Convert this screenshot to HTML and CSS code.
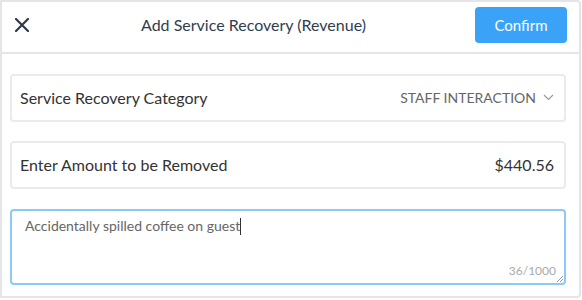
FILE: index.html
```html
<!DOCTYPE html>
<html lang="en">
<head>
    <meta charset="UTF-8">
    <meta name="viewport" content="width=device-width, initial-scale=1.0">
    <title>Add Service Recovery (Revenue)</title>
    <link rel="stylesheet" href="styles.css">
</head>
<body>
    <div class="modal">
        <div class="modal-header">
            <button class="close-btn" aria-label="Close">
                <svg width="14" height="14" viewBox="0 0 14 14">
                    <path d="M1 1 L13 13 M13 1 L1 13" stroke="#2c3a4b" stroke-width="2.2" stroke-linecap="round"/>
                </svg>
            </button>
            <h2>Add Service Recovery (Revenue)</h2>
            <button class="confirm-btn">Confirm</button>
        </div>

        <div class="modal-body">
            <div class="field-row">
                <span class="field-label">Service Recovery Category</span>
                <span class="field-select">
                    STAFF INTERACTION
                    <svg width="11" height="7" viewBox="0 0 11 7">
                        <path d="M1 1 L5.5 5.5 L10 1" fill="none" stroke="#9a9a9a" stroke-width="1.2"/>
                    </svg>
                </span>
            </div>

            <div class="field-row">
                <span class="field-label">Enter Amount to be Removed</span>
                <span class="field-value">$440.56</span>
            </div>

            <div class="note-box">
                <div class="note-text">Accidentally spilled coffee on guest<span class="caret"></span></div>
                <span class="note-count">36/1000</span>
                <svg class="resize-grip" width="7" height="7" viewBox="0 0 7 7">
                    <path d="M1 7 L7 1 M4 7 L7 4" stroke="#999" stroke-width="1"/>
                </svg>
            </div>
        </div>
    </div>
</body>
</html>
```

FILE: styles.css
```css
* {
    margin: 0;
    padding: 0;
    box-sizing: border-box;
}

body {
    font-family: Lato, 'Open Sans', sans-serif;
    background: #fff;
    color: #333;
}

.modal {
    width: 581px;
    height: 298px;
    border: 2px solid #e3e5e8;
    border-radius: 0 4px 4px 0;
    background: #fff;
}

.modal-header {
    height: 52px;
    border-bottom: 2px solid #e3e5e8;
    display: flex;
    align-items: center;
    padding: 0 12px 5px 10px;
}

.close-btn {
    background: none;
    border: none;
    width: 20px;
    height: 20px;
    display: flex;
    align-items: center;
    justify-content: center;
}

.modal-header h2 {
    flex: 1;
    text-align: center;
    font-size: 16px;
    font-weight: 400;
    color: #2f3e4e;
}

.confirm-btn {
    width: 92px;
    height: 36px;
    background: #3aa3f7;
    color: #fff;
    border: none;
    border-radius: 4px;
    font-family: inherit;
    font-size: 15px;
}

.modal-body {
    padding: 20px 13px 0 8px;
    display: flex;
    flex-direction: column;
    gap: 19px;
}

.field-row {
    height: 48px;
    border: 2px solid #ebebeb;
    border-radius: 4px;
    display: flex;
    align-items: center;
    justify-content: space-between;
    padding: 0 10px 2px 8px;
}

.field-label {
    font-size: 16px;
    color: #333;
}

.field-select {
    font-size: 14px;
    color: #666;
    display: flex;
    align-items: center;
    gap: 7px;
}

.field-value {
    font-size: 16px;
    color: #333;
}

.note-box {
    position: relative;
    height: 76px;
    margin-top: 1px;
    border: 2px solid #8cc8fa;
    border-radius: 4px;
    padding: 6px 13px;
}

.note-text {
    font-size: 14px;
    color: #666;
}

.caret {
    display: inline-block;
    width: 1px;
    height: 17px;
    background: #333;
    vertical-align: -4px;
}

.note-count {
    position: absolute;
    right: 8px;
    bottom: 5px;
    font-size: 12px;
    color: #aaa;
}

.resize-grip {
    position: absolute;
    right: 1px;
    bottom: 1px;
}
```
